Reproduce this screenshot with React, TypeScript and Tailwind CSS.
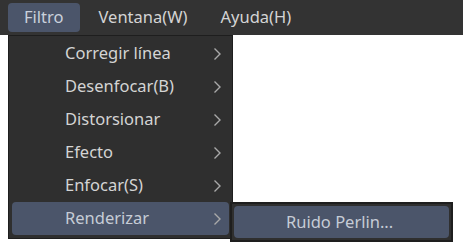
const items = [
  'Corregir línea',
  'Desenfocar(B)',
  'Distorsionar',
  'Efecto',
  'Enfocar(S)',
  'Renderizar',
];

const Chevron = () => (
  <svg width="9" height="14" viewBox="0 0 9 14" fill="none">
    <path d="M1.5 1.5 L7 7 L1.5 12.5" stroke="#a9a9a9" strokeWidth="1.4" />
  </svg>
);

export default function App() {
  return (
    <div className="relative w-[463px] h-[250px] bg-white overflow-hidden font-['Noto_Sans',sans-serif] text-[16.5px] text-[#d4d4d4]">
      <div className="flex items-center h-[35px] bg-[#333333] pl-2">
        <div className="flex items-center h-[29px] px-[16px] rounded bg-[#4b556a] text-[#c9d0dc]">Filtro</div>
        <div className="ml-[19px]">Ventana(W)</div>
        <div className="ml-[33px]">Ayuda(H)</div>
      </div>

      <div className="absolute left-2 top-[35px] w-[225px] h-[204px] bg-[#2f2f2f] border border-[#1e1e1e] pt-px">
        {items.map((label) => {
          const active = label === 'Renderizar';
          return (
            <div
              key={label}
              className={
                active
                  ? 'flex items-center justify-between h-[33px] mx-[3px] pl-[53px] pr-[7px] rounded bg-[#4b556a] text-[#c6ccd6]'
                  : 'flex items-center justify-between h-[33px] mx-[3px] pl-[53px] pr-[7px]'
              }
            >
              <span>{label}</span>
              <Chevron />
            </div>
          );
        })}
      </div>

      <div className="absolute left-[230px] top-[202px] w-[223px] h-[40px] bg-[#2f2f2f] border-2 border-[#1e1e1e] p-[2px]">
        <div className="flex items-center h-full rounded bg-[#4b556a] pl-[52px] text-[#c6ccd6]">Ruido Perlin...</div>
      </div>
    </div>
  );
}
